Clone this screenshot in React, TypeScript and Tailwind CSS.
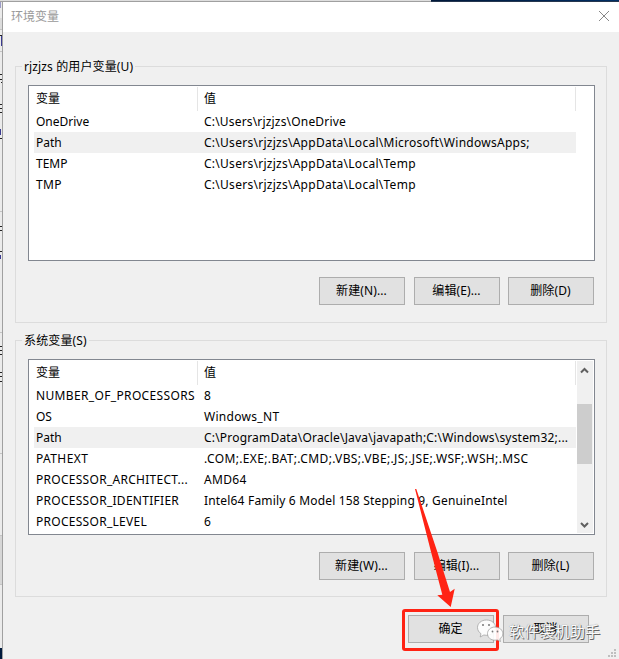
import React, { FC } from 'react';

interface Variable {
  name: string;
  value: string;
  nameClass?: string;
  valueClass?: string;
  selected?: boolean;
}

const userVariables: Variable[] = [
  { name: 'OneDrive', value: 'C:\\Users\\rjzjzs\\OneDrive', valueClass: 'tracking-[0.18px]' },
  {
    name: 'Path',
    value: 'C:\\Users\\rjzjzs\\AppData\\Local\\Microsoft\\WindowsApps;',
    valueClass: 'tracking-[0.27px]',
    selected: true,
  },
  {
    name: 'TEMP',
    value: 'C:\\Users\\rjzjzs\\AppData\\Local\\Temp',
    valueClass: 'tracking-[0.27px]',
  },
  {
    name: 'TMP',
    value: 'C:\\Users\\rjzjzs\\AppData\\Local\\Temp',
    nameClass: 'tracking-[0.4px]',
    valueClass: 'tracking-[0.27px]',
  },
];

const systemVariables: Variable[] = [
  { name: 'NUMBER_OF_PROCESSORS', value: '8', nameClass: 'tracking-[0.35px]' },
  { name: 'OS', value: 'Windows_NT', valueClass: 'tracking-[0.3px]' },
  {
    name: 'Path',
    value: 'C:\\ProgramData\\Oracle\\Java\\javapath;C:\\Windows\\system32;...',
    valueClass: 'tracking-[0.19px]',
    selected: true,
  },
  {
    name: 'PATHEXT',
    value: '.COM;.EXE;.BAT;.CMD;.VBS;.VBE;.JS;.JSE;.WSF;.WSH;.MSC',
    nameClass: 'tracking-[0.4px]',
    valueClass: 'tracking-[0.36px]',
  },
  {
    name: 'PROCESSOR_ARCHITECT...',
    value: 'AMD64',
    nameClass: 'tracking-[0.28px]',
    valueClass: 'tracking-[0.3px]',
  },
  {
    name: 'PROCESSOR_IDENTIFIER',
    value: 'Intel64 Family 6 Model 158 Stepping 9, GenuineIntel',
    nameClass: 'tracking-[0.28px]',
    valueClass: 'tracking-[0.18px]',
  },
  { name: 'PROCESSOR_LEVEL', value: '6', nameClass: 'tracking-[0.28px]' },
];

const Button: FC<{ label: string; className?: string }> = ({ label, className }) => (
  <button
    className={`${className ?? ''} flex h-7 w-[86px] shrink-0 items-center justify-center border border-[#adadad] bg-[#e1e1e1] pr-px tracking-[0.1px] whitespace-nowrap`}
  >
    {label}
  </button>
);

const ScrollBar: FC = () => (
  <div className="flex w-4 shrink-0 flex-col bg-[#f0f0f0] pr-px">
    <svg className="h-[43px] w-[15px]" viewBox="0 0 15 43" fill="none">
      <path d="M4 11.5 7.5 8 11 11.5" stroke="#606060" strokeWidth="2" />
    </svg>
    <div className="h-[60px] bg-[#cdcdcd]" />
    <svg className="h-[69px] w-[15px]" viewBox="0 0 15 69" fill="none">
      <path d="M4 59 7.5 62.5 11 59" stroke="#606060" strokeWidth="2" />
    </svg>
  </div>
);

const VariableList: FC<{ variables: Variable[]; scroll?: boolean }> = ({ variables, scroll }) => (
  <div className="flex h-44 w-[567px] border border-[#828790] bg-white py-px pr-px">
    <div className="flex w-[547px] shrink-0 flex-col">
      <div className="flex h-6">
        <div className="w-[169px] border-r border-[#e5e5e5] pl-[7px] leading-6">变量</div>
        <div className="w-[378px] border-r border-[#e5e5e5] pl-[6px] leading-6">值</div>
      </div>
      {variables.map((data, index) => (
        <div
          key={index}
          className={`${data.selected ? 'bg-[#f0f0f0]' : ''} ml-[5px] flex h-[21px] leading-[22px] whitespace-nowrap`}
        >
          <div className="w-[170px] pl-0.5">
            <span className={data.nameClass}>{data.name}</span>
          </div>
          <span className={data.valueClass}>{data.value}</span>
        </div>
      ))}
    </div>
    {scroll && (
      <div className="ml-px flex">
        <ScrollBar />
      </div>
    )}
  </div>
);

interface GroupProps {
  title: string;
  variables: Variable[];
  buttons: string[];
  scroll?: boolean;
}

const VariableGroup: FC<GroupProps> = ({ title, variables, buttons, scroll }) => (
  <fieldset className="h-[266px] w-[592px] border border-[#dcdcdc] pl-3">
    <legend className="-ml-[6px] h-[18px] px-0.5 leading-5 tracking-[0.13px] whitespace-nowrap">
      {title}
    </legend>
    <div className="pt-[10px]">
      <VariableList variables={variables} scroll={scroll} />
      <div className={`${scroll ? 'mt-[17px]' : 'mt-4'} ml-[291px] flex`}>
        <Button label={buttons[0]} />
        <Button label={buttons[1]} className="ml-[9px]" />
        <Button label={buttons[2]} className="ml-2" />
      </div>
    </div>
  </fieldset>
);

// Slice of the parent window that shows at the left edge of the dialog
const ParentWindow: FC = () => (
  <svg className="h-[657px] w-0.5 shrink-0" viewBox="0 2 2 657">
    <rect y="2" width="2" height="657" fill="#ebebeb" />
    <rect y="2" width="1" height="6" fill="#9c9cc8" />
    <rect y="18" width="2" height="12" fill="#dcdcdc" />
    <path
      d="M0 29.500h2M0 51.500h2M0 211.500h2M0 332.500h2M0 453.500h2M0 535.500h2M0 584.500h2"
      stroke="#c4c4c4"
    />
    <path
      d="M0 35.500h2M0 74.500h2M0 79.500h2M1 82.500h1M0 104.500h2M0 108.500h2M0 112.500h2M0 138.500h2M0 226.500h2M0 230.500h2M0 251.500h2M0 346.500h2M0 350.500h2M0 354.500h2M0 372.500h2M0 376.500h2M0 381.500h2"
      stroke="#222"
    />
    <path d="M1.500 36v10M.5 129v6M.5 255v4" stroke="#3a3a90" />
    <rect y="536" width="2" height="48" fill="#d6d6d6" />
    <rect y="648" width="2" height="11" fill="#001a3c" />
  </svg>
);

const Watermark: FC = () => (
  <div className="absolute top-[617px] left-[476px] flex items-center">
    <svg className="h-7 w-8" viewBox="0 0 32 28" stroke="#999" strokeWidth=".7">
      <path
        d="M10.500 3C5.300 3 1.500 6.400 1.500 10.500c0 2.600 1.400 4.800 3.500 6.200l-.8 3.300 3.600-2c.9.2 1.800.3 2.700.3 5.200 0 9-3.500 9-7.800S15.700 3 10.500 3z"
        fill="#fff"
        fillOpacity=".9"
      />
      <path
        d="M19 10c-4.400 0-7.500 3-7.500 6.700s3.100 6.500 7.500 6.500c.9 0 1.700-.1 2.500-.3l3 1.600-.7-2.700c2-1.200 3-3 3-5.100 0-3.700-3.400-6.700-7.800-6.700z"
        fill="#fff"
        fillOpacity=".9"
      />
      <g fill="#777" stroke="none">
        <circle cx="7" cy="8" r="1" />
        <circle cx="13" cy="8" r="1" />
        <circle cx="16.500" cy="14.500" r=".9" />
        <circle cx="21.500" cy="14.500" r=".9" />
      </g>
    </svg>
    <span className="ml-px text-[15.2px] leading-7 whitespace-nowrap text-[#fafafa] [text-shadow:1px_1px_0_#666,0_0_1px_#777]">
      软件装机助手
    </span>
  </div>
);

const App: FC = () => (
  <div className="relative flex h-[659px] w-[619px] flex-col overflow-hidden bg-[#f0f0f0] font-['Noto_Sans','Noto_Sans_CJK_SC',sans-serif] text-[12px] text-black">
    <div className="flex h-0.5 shrink-0">
      <div className="w-[431px] border-b border-[#a0a0a0] bg-[#dedede]" />
      <div className="flex-1 border-b border-[#26364e] bg-linear-to-r from-[#00183a] to-[#002e64]" />
    </div>
    <div className="flex flex-1">
      <ParentWindow />
      <main className="flex w-[617px] flex-col border-l border-[#a0a0a0]">
        <header className="flex h-[30px] items-center justify-between bg-white pr-[9px] pl-2 text-[#999]">
          <h1>环境变量</h1>
          <svg className="mb-0.5 size-3" viewBox="0 0 12 12" fill="none">
            <path d="M1 1 11 11M11 1 1 11" stroke="#888" />
          </svg>
        </header>
        <div className="flex flex-col gap-2 pt-[25px] pl-3">
          <VariableGroup
            title="rjzjzs 的用户变量(U)"
            variables={userVariables}
            buttons={['新建(N)...', '编辑(E)...', '删除(D)']}
          />
          <VariableGroup
            title="系统变量(S)"
            variables={systemVariables}
            buttons={['新建(W)...', '编辑(I)...', '删除(L)']}
            scroll
          />
        </div>
        <footer className="flex gap-[9px] pt-[18px] pl-[405px]">
          <Button label="确定" />
          <Button label="取消" />
        </footer>
      </main>
    </div>

    <svg className="absolute right-[3px] bottom-0.5 size-2" viewBox="0 0 8 8" fill="#bfbfbf">
      <path d="M6 0h2v2H6zM3 3h2v2H3zM6 3h2v2H6zM0 6h2v2H0zM3 6h2v2H3zM6 6h2v2H6z" />
    </svg>

    <div className="absolute top-[609px] left-[402px] h-[42px] w-[97px] rounded-[3px] border-3 border-[#ff2314]" />
    <svg className="absolute top-[485px] left-[410px] h-[125px] w-[50px]" viewBox="410 485 50 125">
      <path
        d="M415 489h1.300L437.300 551.700 450 592l4.700-3.300L450.700 607 437.300 595.300l5-.5L431 551.700z"
        fill="#ff2314"
      />
    </svg>
    <Watermark />
  </div>
);

export default App;
